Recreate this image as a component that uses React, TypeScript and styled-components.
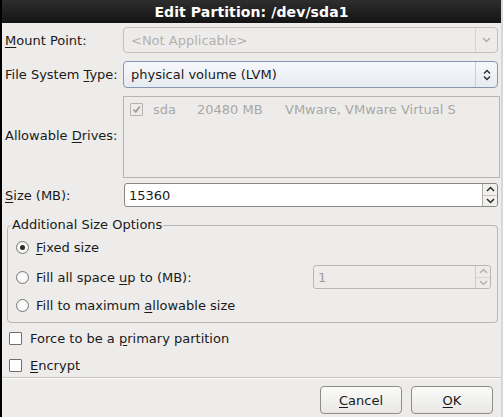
import React from "react";
import styled, { createGlobalStyle } from "styled-components";

const Global = createGlobalStyle`
  html, body { margin: 0; padding: 0; background: #edeceb; }
  body { font-family: "DejaVu Sans", "Liberation Sans", sans-serif; font-size: 13px; color: #1a1a1a; }
  u { text-decoration: underline; text-underline-offset: 2px; }
`;

const Window = styled.div`
  width: 503px;
  height: 417px;
  box-sizing: border-box;
  border-left: 2px solid #000;
  border-right: 2px solid #d8d8d6;
  background: #edeceb;
  display: flex;
  flex-direction: column;
  overflow: hidden;
`;

const TitleBar = styled.div`
  height: 23px;
  flex: none;
  background: linear-gradient(#2e2e2e, #141414);
  color: #fff;
  font-weight: bold;
  font-size: 14px;
  letter-spacing: 0.1px;
  display: flex;
  align-items: center;
  justify-content: center;
  margin-left: -2px;
  margin-right: -2px;
`;

const Form = styled.div`
  display: grid;
  grid-template-columns: 118px 375px;
  padding: 4px 0 0 3px;
  row-gap: 8px;
  align-items: center;
`;

const Label = styled.div`
  white-space: nowrap;
`;

const Combo = styled.div<{ $active?: boolean }>`
  height: ${(p) => (p.$active ? 27 : 26)}px;
  box-sizing: border-box;
  border: 1px solid ${(p) => (p.$active ? "#8596b0" : "#c2c0bd")};
  border-radius: 4px;
  background: ${(p) => (p.$active ? "linear-gradient(#f6f8fb, #e6ebf2)" : "#edeceb")};
  color: ${(p) => (p.$active ? "#1a1a1a" : "#b3b1ae")};
  display: flex;
  align-items: center;
  padding-left: 7px;
`;

const ComboText = styled.div`
  flex: 1;
`;

const ComboArrow = styled.div<{ $active?: boolean }>`
  width: 22px;
  height: 100%;
  border-left: 1px solid ${(p) => (p.$active ? "#c8cfd9" : "#d6d4d1")};
  display: flex;
  align-items: center;
  justify-content: center;
  box-sizing: border-box;
`;

const DriveBox = styled.div`
  height: 82px;
  box-sizing: border-box;
  border: 1px solid #b7b5b2;
  margin-right: -2px;
  margin-bottom: -3px;
  background: #edeceb;
  padding: 3px 0 0 6px;
`;

const DriveRow = styled.div`
  display: flex;
  align-items: center;
  color: #a9a7a4;
  height: 18px;
`;

const Cell = styled.div<{ $w: number }>`
  width: ${(p) => p.$w}px;
  flex: none;
  white-space: nowrap;
`;

const SmallCheck = styled.div<{ $disabled?: boolean }>`
  width: 11px;
  height: 11px;
  border: 1px solid ${(p) => (p.$disabled ? "#b5b3b0" : "#6e6e6e")};
  background: ${(p) => (p.$disabled ? "#edeceb" : "#fff")};
  border-radius: 1px;
  flex: none;
  display: flex;
  align-items: center;
  justify-content: center;
`;

const Spin = styled.div<{ $disabled?: boolean; $w?: number }>`
  height: 24px;
  width: ${(p) => (p.$w ? `${p.$w}px` : "auto")};
  box-sizing: border-box;
  border: 1px solid ${(p) => (p.$disabled ? "#b9b7b4" : "#8a8886")};
  border-radius: 3px;
  background: ${(p) => (p.$disabled ? "#edeceb" : "#fff")};
  color: ${(p) => (p.$disabled ? "#9d9b98" : "#1a1a1a")};
  display: flex;
  align-items: center;
  padding-left: 4px;
  margin-left: 1px;
`;

const SpinText = styled.div`
  flex: 1;
`;

const SpinButtons = styled.div<{ $disabled?: boolean }>`
  width: 15px;
  height: 100%;
  border-left: 1px solid ${(p) => (p.$disabled ? "#cfcdca" : "#b0aeab")};
  background: ${(p) => (p.$disabled ? "#edeceb" : "#f1f0ef")};
  display: flex;
  flex-direction: column;
  box-sizing: border-box;
  border-radius: 0 3px 3px 0;
`;

const SpinHalf = styled.div<{ $top?: boolean; $disabled?: boolean }>`
  flex: 1;
  display: flex;
  align-items: center;
  justify-content: center;
  border-bottom: ${(p) => (p.$top ? `1px solid ${p.$disabled ? "#d6d4d1" : "#c5c3c0"}` : "none")};
`;

const Frame = styled.fieldset`
  margin: 10px 3px 0 5px;
  padding: 0 0 3px 0;
  border: 1px solid #b9b7b4;
  border-radius: 4px;
  min-width: 0;
  & > legend {
    padding: 0 1px;
    margin-left: 3px;
    line-height: 16px;
  }
`;

const OptionRow = styled.div<{ $h: number }>`
  height: ${(p) => p.$h}px;
  display: flex;
  align-items: center;
  padding-left: 8px;
  padding-right: 6px;
  gap: 7px;
`;

const Radio = styled.div<{ $checked?: boolean }>`
  width: 11px;
  height: 11px;
  border-radius: 50%;
  border: 1px solid #7a7875;
  background: radial-gradient(circle, #fff, #f0efee);
  display: flex;
  align-items: center;
  justify-content: center;
  flex: none;
  &::after {
    content: "";
    display: ${(p) => (p.$checked ? "block" : "none")};
    width: 5px;
    height: 5px;
    border-radius: 50%;
    background: #2a2a2a;
  }
`;

const Grow = styled.div`
  flex: 1;
`;

const CheckRow = styled.div`
  height: 27px;
  display: flex;
  align-items: center;
  padding-left: 7px;
  gap: 8px;
`;

const Checks = styled.div`
  padding-top: 2px;
`;

const Separator = styled.div`
  height: 0;
  border-top: 1px solid #c7c5c2;
  border-bottom: 1px solid #fafafa;
  margin-top: -2px;
`;

const ButtonBar = styled.div`
  display: flex;
  justify-content: flex-end;
  gap: 9px;
  padding: 7px 8px 0 0;
`;

const Button = styled.button`
  width: 82px;
  height: 28px;
  border: 1px solid #8f8d8a;
  border-radius: 4px;
  background: linear-gradient(#fbfbfa, #e8e7e5);
  font-family: "DejaVu Sans", "Liberation Sans", sans-serif;
  font-size: 13px;
  color: #1a1a1a;
  padding: 0;
`;

const Chevron = ({ color, dir }: { color: string; dir: "up" | "down" }) => (
  <svg width="9" height="6" viewBox="0 0 9 6">
    <path
      d={dir === "down" ? "M1 1 L4.5 4.5 L8 1" : "M1 5 L4.5 1.5 L8 5"}
      fill="none"
      stroke={color}
      strokeWidth="1.5"
    />
  </svg>
);

const UpDown = () => (
  <svg width="8" height="12" viewBox="0 0 8 12">
    <path d="M1 4.5 L4 1.5 L7 4.5 M1 7.5 L4 10.5 L7 7.5" fill="none" stroke="#2a2a2a" strokeWidth="1.4" />
  </svg>
);

const Tick = () => (
  <svg width="9" height="9" viewBox="0 0 9 9">
    <path d="M1.5 4.5 L3.7 7 L7.8 1.5" fill="none" stroke="#9a9895" strokeWidth="1.6" />
  </svg>
);

export default function App() {
  return (
    <>
      <Global />
      <Window>
        <TitleBar>Edit Partition: /dev/sda1</TitleBar>
        <Form>
          <Label>
            <u>M</u>ount Point:
          </Label>
          <Combo>
            <ComboText>&lt;Not Applicable&gt;</ComboText>
            <ComboArrow>
              <Chevron color="#b0aeab" dir="down" />
            </ComboArrow>
          </Combo>

          <Label>
            File System <u>T</u>ype:
          </Label>
          <Combo $active>
            <ComboText>physical volume (LVM)</ComboText>
            <ComboArrow $active>
              <UpDown />
            </ComboArrow>
          </Combo>

          <Label>
            Allowable <u>D</u>rives:
          </Label>
          <DriveBox>
            <DriveRow>
              <Cell $w={23}>
                <SmallCheck $disabled>
                  <Tick />
                </SmallCheck>
              </Cell>
              <Cell $w={44}>sda</Cell>
              <Cell $w={88}>20480 MB</Cell>
              <Cell $w={200}>VMware, VMware Virtual S</Cell>
            </DriveRow>
          </DriveBox>

          <Label>
            <u>S</u>ize (MB):
          </Label>
          <Spin>
            <SpinText>15360</SpinText>
            <SpinButtons>
              <SpinHalf $top>
                <Chevron color="#2a2a2a" dir="up" />
              </SpinHalf>
              <SpinHalf>
                <Chevron color="#2a2a2a" dir="down" />
              </SpinHalf>
            </SpinButtons>
          </Spin>
        </Form>

        <Frame>
          <legend>Additional Size Options</legend>
          <OptionRow $h={29}>
            <Radio $checked />
            <span>
              <u>F</u>ixed size
            </span>
          </OptionRow>
          <OptionRow $h={30}>
            <Radio />
            <Grow>
              Fill all space <u>u</u>p to (MB):
            </Grow>
            <Spin $disabled $w={178}>
              <SpinText>1</SpinText>
              <SpinButtons $disabled>
                <SpinHalf $top $disabled>
                  <Chevron color="#b5b3b0" dir="up" />
                </SpinHalf>
                <SpinHalf $disabled>
                  <Chevron color="#b5b3b0" dir="down" />
                </SpinHalf>
              </SpinButtons>
            </Spin>
          </OptionRow>
          <OptionRow $h={27}>
            <Radio />
            <span>
              Fill to maximum <u>a</u>llowable size
            </span>
          </OptionRow>
        </Frame>

        <Checks>
          <CheckRow>
            <SmallCheck />
            <span>
              Force to be a <u>p</u>rimary partition
            </span>
          </CheckRow>
          <CheckRow>
            <SmallCheck />
            <span>
              <u>E</u>ncrypt
            </span>
          </CheckRow>
        </Checks>
        <Separator />
        <ButtonBar>
          <Button>
            <u>C</u>ancel
          </Button>
          <Button>
            <u>O</u>K
          </Button>
        </ButtonBar>
      </Window>
    </>
  );
}
